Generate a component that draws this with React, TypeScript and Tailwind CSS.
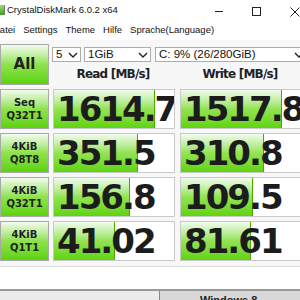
import React from 'react';

interface Result {
    top: string;
    bottom: string;
    read: string;
    readPct: number;
    write: string;
    writePct: number;
}

const results: Result[] = [
    { top: 'Seq', bottom: 'Q32T1', read: '1614.7', readPct: 84, write: '1517.8', writePct: 84 },
    { top: '4KiB', bottom: 'Q8T8', read: '351.5', readPct: 70, write: '310.8', writePct: 69 },
    { top: '4KiB', bottom: 'Q32T1', read: '156.8', readPct: 63, write: '109.5', writePct: 60 },
    { top: '4KiB', bottom: 'Q1T1', read: '41.02', readPct: 51, write: '81.61', writePct: 58 },
];

const uiFont = { fontFamily: '"Liberation Sans", Arial, sans-serif' };
const boldFont = { fontFamily: '"DejaVu Sans", Verdana, sans-serif' };

const GreenButton: React.FC<{ className?: string; children: React.ReactNode }> = ({ className, children }) => (
    <div className={`w-[49px] shrink-0 flex flex-col items-center justify-center border border-[#a9a9a9] bg-gradient-to-b from-[#f2fbec] via-[#8fe14a] to-[#5ad400] text-[#222] font-bold leading-[13px] ${className ?? ''}`}>
        {children}
    </div>
);

const ValueCell: React.FC<{ value: string; pct: number; className?: string }> = ({ value, pct, className }) => (
    <div className={`relative h-full border border-[#c9c9c9] bg-white overflow-hidden ${className ?? ''}`}>
        <div
            className="absolute left-0 top-0 bottom-0 bg-gradient-to-b from-[#f3fbee] via-[#93e34f] to-[#5fd405] border-r border-[#4aa800]"
            style={{ width: `${pct}%` }}
        />
        <div className="relative h-full flex items-center pl-[3px] text-[34px] font-bold text-[#1c1c1c] whitespace-nowrap tracking-[-2px]" style={boldFont}>
            {value}
        </div>
    </div>
);

const Combo: React.FC<{ label: string; className?: string }> = ({ label, className }) => (
    <div className={`h-[15px] flex items-center justify-between border border-[#adadad] bg-white pl-[3px] pr-[2px] text-[11.5px] text-[#111] ${className ?? ''}`} style={uiFont}>
        <span className="leading-none">{label}</span>
        <svg width="10" height="6" viewBox="0 0 10 6" className="shrink-0">
            <path d="M1 1 L5 5 L9 1" fill="none" stroke="#222" strokeWidth="1.4" />
        </svg>
    </div>
);

export default function App() {
    return (
        <div className="w-[300px] h-[300px] overflow-hidden bg-[#f7f7f7] flex flex-col" style={uiFont}>
            {/* Title bar */}
            <div className="h-[20px] shrink-0 bg-white flex items-center relative">
                <div className="w-[5px] h-[10px] bg-gradient-to-b from-[#9be36a] to-[#3d9f1b] border-r border-[#777]" />
                <span className="ml-[2px] text-[9.5px] text-[#111] leading-none">CrystalDiskMark 6.0.2 x64</span>
                <div className="absolute left-[215px] top-[11px] w-[8px] h-px bg-[#222]" />
                <div className="absolute left-[252px] top-[7px] w-[9px] h-[9px] border border-[#222]" />
                <svg className="absolute left-[290px] top-[7px]" width="10" height="10" viewBox="0 0 10 10">
                    <path d="M0.5 0.5 L9.5 9.5 M9.5 0.5 L0.5 9.5" stroke="#222" strokeWidth="1" />
                </svg>
            </div>

            {/* Menu bar */}
            <div className="h-[20px] shrink-0 bg-white flex items-center text-[9.5px] text-[#111] leading-none -ml-[7px] gap-[8px]">
                <span>Datei</span>
                <span>Settings</span>
                <span>Theme</span>
                <span>Hilfe</span>
                <span>Sprache(Language)</span>
            </div>

            {/* Main grid */}
            <div className="flex flex-col pt-[4px]">
                <div className="flex h-[41px]">
                    <GreenButton className="h-[41px] text-[15px]">
                        <span style={boldFont}>All</span>
                    </GreenButton>
                    <div className="flex flex-col ml-[3px]">
                        <div className="flex mt-[3px]">
                            <Combo label="5" className="w-[29px]" />
                            <Combo label="1GiB" className="w-[67px] ml-[3px]" />
                            <Combo label="C: 9% (26/280GiB)" className="w-[152px] ml-[4px]" />
                        </div>
                        <div className="flex flex-1 items-center font-bold text-[12px] tracking-[-0.8px] text-[#222] pt-[1px]" style={boldFont}>
                            <div className="w-[122px] text-center">Read [MB/s]</div>
                            <div className="w-[122px] ml-[5px] text-center">Write [MB/s]</div>
                        </div>
                    </div>
                </div>

                {results.map((r, i) => (
                    <div key={i} className="flex h-[40px] mt-[4px]">
                        <GreenButton className="h-[40px] text-[10px]">
                            <span style={boldFont}>{r.top}</span>
                            <span style={boldFont}>{r.bottom}</span>
                        </GreenButton>
                        <ValueCell value={r.read} pct={r.readPct} className="w-[122px] ml-[4px] shrink-0" />
                        <ValueCell value={r.write} pct={r.writePct} className="w-[122px] ml-[5px] shrink-0" />
                    </div>
                ))}

                {/* Comment area */}
                <div className="mt-[5px] h-[25px] bg-white border-t border-[#dcdcdc] border-b-2 border-b-[#9a9a9a]" />
            </div>

            {/* Desktop strip behind window */}
            <div className="flex-1 flex bg-[#d8d8d8] overflow-hidden">
                <div className="w-[160px] bg-[#ececec] border-r border-[#888]" />
                <div className="flex-1 pl-[40px] text-[11px] font-bold text-[#222] leading-none pt-[4px]">Windows 8</div>
            </div>
        </div>
    );
}
